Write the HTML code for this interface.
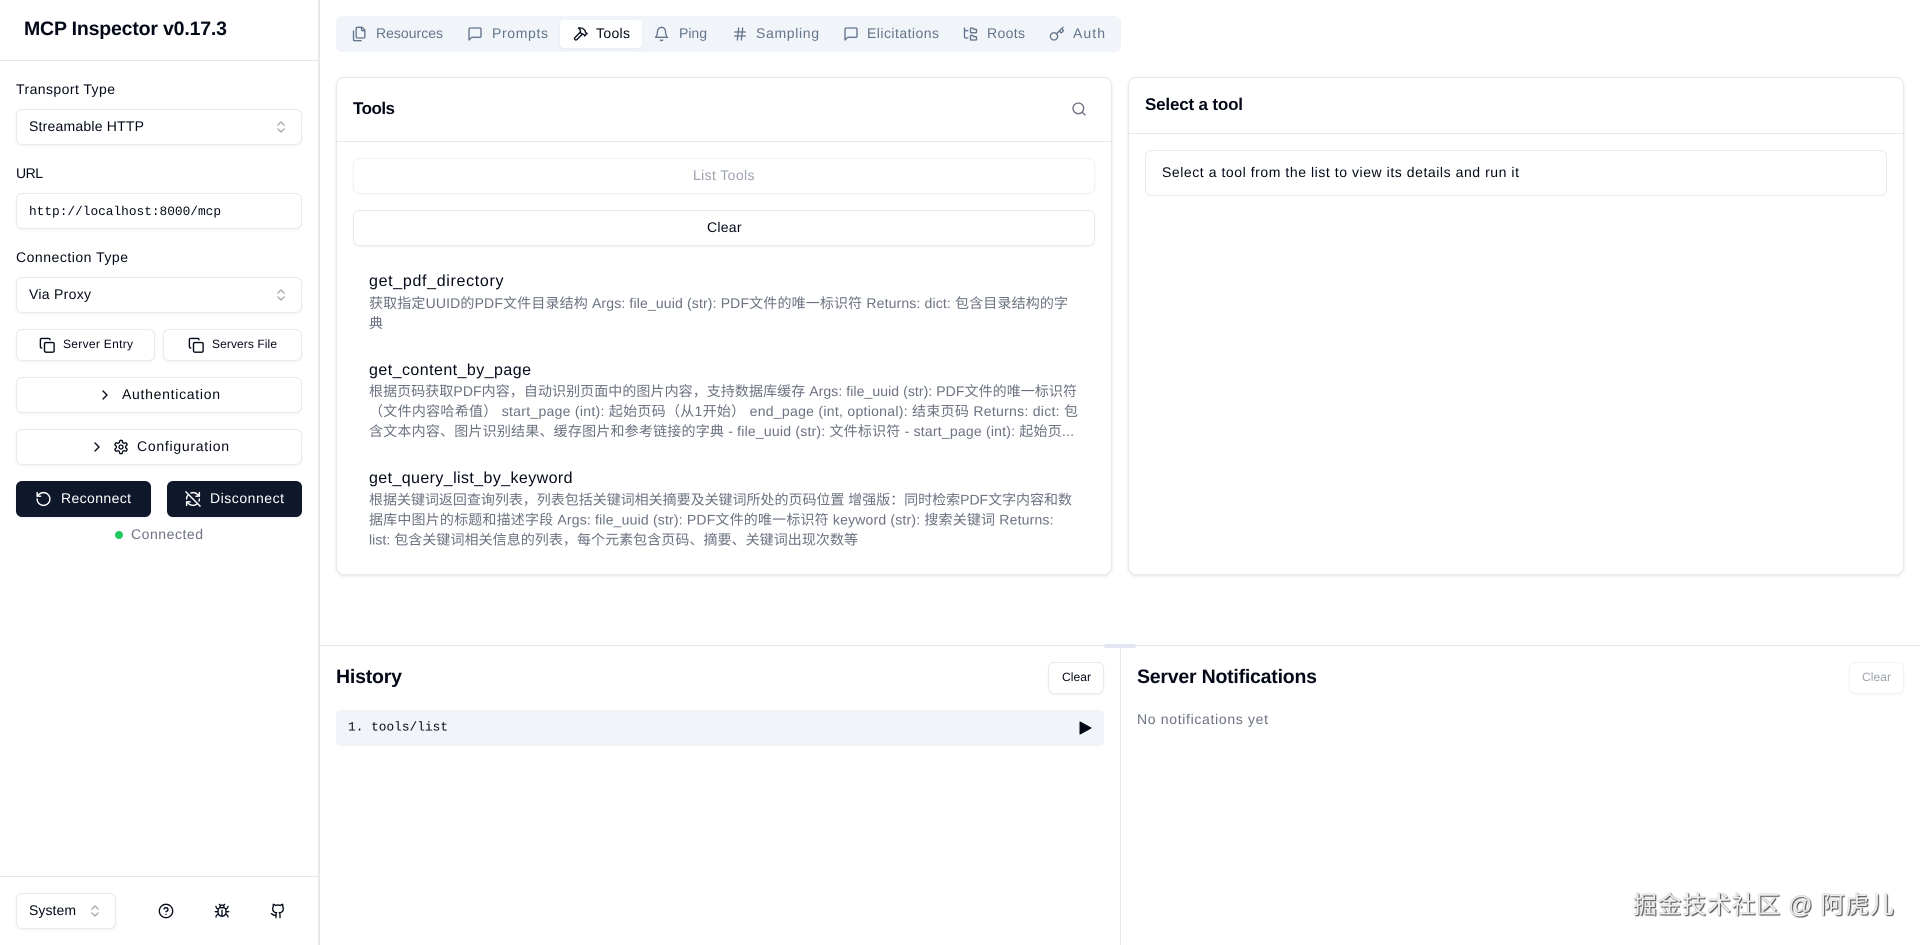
<!DOCTYPE html>
<html lang="en"><head><meta charset="utf-8"><title>MCP Inspector</title>
<style>
html,body{margin:0;padding:0;width:1920px;height:945px;overflow:hidden;background:#fff}
.b{position:absolute;box-sizing:border-box;background:#fff;border:1px solid #e6eaf0;border-radius:6px;box-shadow:0 1px 2px rgba(0,0,0,.05)}
.l{position:absolute;background:#e5e7eb}
svg#o{position:absolute;left:0;top:0}
text{font-family:"Liberation Sans","Noto Sans CJK SC",sans-serif;font-size:14px;fill:#020817;text-rendering:geometricPrecision;transform:translateY(-.8px)}
.t{fill:#64748b}.m{font-family:"Liberation Mono",monospace;font-size:12.8px}
.h{font-weight:700;font-size:19.5px}.c{font-size:17px;font-weight:700}
.n{font-size:16px}.d{fill:#6b7280}.s{font-size:12px}.w{fill:#fff}.g{fill:#9ca3af}
.i{fill:none;stroke:#020817;stroke-width:2;stroke-linecap:round;stroke-linejoin:round}
.it{stroke:#64748b}.iw{stroke:#fff}.io{stroke:#a3a9b4}
#wm{position:absolute;left:1633px;top:890px;font:24px/32px "Liberation Sans","Noto Sans CJK SC",sans-serif;letter-spacing:.65px;color:#eee;text-shadow:1px 1px 1px #444,0 0 1px #777;white-space:nowrap}
</style></head><body>
<!-- sidebar -->
<div class="l" style="left:318px;top:0;width:2px;height:945px"></div>
<div class="l" style="left:0;top:60px;width:318px;height:1px"></div>
<div class="l" style="left:0;top:876px;width:318px;height:1px"></div>
<div class="b" style="left:16px;top:109px;width:286px;height:36px"></div>
<div class="b" style="left:16px;top:193px;width:286px;height:36px"></div>
<div class="b" style="left:16px;top:277px;width:286px;height:36px"></div>
<div class="b" style="left:16px;top:329px;width:139px;height:32px"></div>
<div class="b" style="left:163px;top:329px;width:139px;height:32px"></div>
<div class="b" style="left:16px;top:377px;width:286px;height:36px"></div>
<div class="b" style="left:16px;top:429px;width:286px;height:36px"></div>
<div class="b" style="left:16px;top:481px;width:135px;height:36px;background:#0f172a;border-color:#0f172a"></div>
<div class="b" style="left:167px;top:481px;width:135px;height:36px;background:#0f172a;border-color:#0f172a"></div>
<div style="position:absolute;left:115px;top:531px;width:8px;height:8px;border-radius:50%;background:#22c55e"></div>
<div class="b" style="left:16px;top:893px;width:100px;height:36px"></div>
<!-- tabs -->
<div style="position:absolute;left:336px;top:16px;width:785px;height:36px;border-radius:6px;background:#f1f5f9"></div>
<div class="b" style="left:560px;top:20px;width:82px;height:28px;border:0;border-radius:4px"></div>
<!-- cards -->
<div class="b" style="left:336px;top:77px;width:776px;height:498px;border-radius:8px;box-shadow:0 1px 3px rgba(0,0,0,.1)"></div>
<div class="l" style="left:337px;top:141px;width:774px;height:1px"></div>
<div class="b" style="left:353px;top:158px;width:742px;height:36px;box-shadow:0 1px 2px rgba(0,0,0,.03);border-color:#eff2f6"></div>
<div class="b" style="left:353px;top:210px;width:742px;height:36px"></div>
<div class="b" style="left:1128px;top:77px;width:776px;height:498px;border-radius:8px;box-shadow:0 1px 3px rgba(0,0,0,.1)"></div>
<div class="l" style="left:1129px;top:133px;width:774px;height:1px"></div>
<div class="b" style="left:1145px;top:150px;width:742px;height:46px;box-shadow:none"></div>
<!-- bottom -->
<div class="l" style="left:320px;top:645px;width:1600px;height:1px"></div>
<div class="l" style="left:1120px;top:646px;width:1px;height:299px"></div>
<div style="position:absolute;left:1104px;top:644px;width:32px;height:4px;border-radius:2px;background:#e4e7f3"></div>
<div class="b" style="left:1048px;top:662px;width:56px;height:32px"></div>
<div class="b" style="left:1849px;top:662px;width:55px;height:32px;box-shadow:0 1px 2px rgba(0,0,0,.03);border-color:#eff2f6"></div>
<div style="position:absolute;left:336px;top:710px;width:768px;height:36px;border-radius:4px;background:#f1f5f9"></div>

<svg id="o" width="1920" height="945" viewBox="0 0 1920 945" xmlns="http://www.w3.org/2000/svg">
<!-- sidebar text -->
<text x="24" y="36" textLength="203" style="font-size:19.5px;font-weight:700">MCP Inspector v0.17.3</text>
<text x="16" y="95" textLength="99">Transport Type</text>
<text x="29" y="132" textLength="115">Streamable HTTP</text>
<text x="16" y="179" textLength="27">URL</text>
<text x="29" y="216" class="m" textLength="192">http://localhost:8000/mcp</text>
<text x="16" y="263" textLength="112">Connection Type</text>
<text x="29" y="300" textLength="62">Via Proxy</text>
<text x="63" y="349" class="s" textLength="70">Server Entry</text>
<text x="212" y="349" class="s" textLength="65">Servers File</text>
<text x="122" y="400" textLength="98">Authentication</text>
<text x="137" y="452" textLength="92">Configuration</text>
<text x="61" y="504" class="w" textLength="70">Reconnect</text>
<text x="210" y="504" class="w" textLength="74">Disconnect</text>
<text x="131" y="540" class="d" textLength="72">Connected</text>
<text x="29" y="916" textLength="47">System</text>
<!-- select chevrons -->
<svg x="273.500" y="119.500" width="15" height="15" viewBox="0 0 24 24" class="i io"><path d="m7 15 5 5 5-5"/><path d="m7 9 5-5 5 5"/></svg>
<svg x="273.500" y="287.500" width="15" height="15" viewBox="0 0 24 24" class="i io"><path d="m7 15 5 5 5-5"/><path d="m7 9 5-5 5 5"/></svg>
<svg x="87.500" y="903.500" width="15" height="15" viewBox="0 0 24 24" class="i io"><path d="m7 15 5 5 5-5"/><path d="m7 9 5-5 5 5"/></svg>
<!-- copy -->
<svg x="39" y="337" width="16.500" height="16.500" viewBox="0 0 24 24" class="i"><rect width="14" height="14" x="8" y="8" rx="2" ry="2"/><path d="M4 16c-1.100 0-2-.9-2-2V4c0-1.100.9-2 2-2h10c1.100 0 2 .9 2 2"/></svg>
<svg x="188" y="337" width="16.500" height="16.500" viewBox="0 0 24 24" class="i"><rect width="14" height="14" x="8" y="8" rx="2" ry="2"/><path d="M4 16c-1.100 0-2-.9-2-2V4c0-1.100.9-2 2-2h10c1.100 0 2 .9 2 2"/></svg>
<!-- chevron right -->
<svg x="97" y="387" width="16" height="16" viewBox="0 0 24 24" class="i"><path d="m9 18 6-6-6-6"/></svg>
<svg x="89" y="439" width="16" height="16" viewBox="0 0 24 24" class="i"><path d="m9 18 6-6-6-6"/></svg>
<!-- gear -->
<svg x="113" y="439" width="16" height="16" viewBox="0 0 24 24" class="i"><path d="M12.220 2h-.44a2 2 0 0 0-2 2v.18a2 2 0 0 1-1 1.730l-.43.25a2 2 0 0 1-2 0l-.15-.08a2 2 0 0 0-2.730.73l-.22.38a2 2 0 0 0 .73 2.730l.15.1a2 2 0 0 1 1 1.720v.51a2 2 0 0 1-1 1.740l-.15.09a2 2 0 0 0-.73 2.730l.22.38a2 2 0 0 0 2.730.73l.15-.08a2 2 0 0 1 2 0l.43.25a2 2 0 0 1 1 1.730V20a2 2 0 0 0 2 2h.44a2 2 0 0 0 2-2v-.18a2 2 0 0 1 1-1.730l.43-.25a2 2 0 0 1 2 0l.15.08a2 2 0 0 0 2.730-.73l.22-.39a2 2 0 0 0-.73-2.730l-.15-.08a2 2 0 0 1-1-1.740v-.5a2 2 0 0 1 1-1.740l.15-.09a2 2 0 0 0 .73-2.730l-.22-.38a2 2 0 0 0-2.730-.73l-.15.08a2 2 0 0 1-2 0l-.43-.25a2 2 0 0 1-1-1.730V4a2 2 0 0 0-2-2z"/><circle cx="12" cy="12" r="3"/></svg>
<!-- reconnect -->
<svg x="35" y="490.500" width="17" height="17" viewBox="0 0 24 24" class="i iw"><path d="M3 12a9 9 0 1 0 9-9 9.750 9.750 0 0 0-6.740 2.740L3 8"/><path d="M3 3v5h5"/></svg>
<svg x="184.500" y="490.500" width="17" height="17" viewBox="0 0 24 24" class="i iw"><path d="M21 8L18.740 5.740A9.750 9.750 0 0 0 12 3C11 3 10.030 3.160 9.130 3.470"/><path d="M8 16H3v5"/><path d="M3 12C3 9.510 4 7.260 5.640 5.640"/><path d="m3 16 2.260 2.260A9.750 9.750 0 0 0 12 21c2.490 0 4.740-1 6.360-2.640"/><path d="M21 12c0 1-.16 1.970-.47 2.870"/><path d="M21 3v5h-5"/><path d="M22 22 2 2"/></svg>
<!-- footer icons -->
<svg x="158" y="903" width="16" height="16" viewBox="0 0 24 24" class="i"><circle cx="12" cy="12" r="10"/><path d="M9.090 9a3 3 0 0 1 5.830 1c0 2-3 3-3 3"/><path d="M12 17h.01"/></svg>
<svg x="214" y="903" width="16" height="16" viewBox="0 0 24 24" class="i"><path d="m8 2 1.880 1.880"/><path d="M14.120 3.880 16 2"/><path d="M9 7.130v-1a3.003 3.003 0 1 1 6 0v1"/><path d="M12 20c-3.300 0-6-2.700-6-6v-3a4 4 0 0 1 4-4h4a4 4 0 0 1 4 4v3c0 3.300-2.700 6-6 6"/><path d="M12 20v-9"/><path d="M6.530 9C4.600 8.800 3 7.100 3 5"/><path d="M6 13H2"/><path d="M3 21c0-2.100 1.700-3.900 3.800-4"/><path d="M20.970 5c0 2.100-1.600 3.800-3.500 4"/><path d="M22 13h-4"/><path d="M17.200 17c2.100.1 3.800 1.900 3.800 4"/></svg>
<svg x="270" y="903" width="16" height="16" viewBox="0 0 24 24" class="i"><path d="M15 22v-4a4.800 4.800 0 0 0-1-3.500c3 0 6-2 6-5.500.08-1.250-.27-2.480-1-3.500.28-1.150.28-2.350 0-3.500 0 0-1 0-3 1.500-2.640-.5-5.360-.5-8 0C6 2 5 2 5 2c-.3 1.150-.3 2.350 0 3.500A5.403 5.403 0 0 0 4 9c0 3.500 3 5.500 6 5.500-.39.49-.68 1.050-.85 1.650-.17.6-.22 1.230-.15 1.850v4"/><path d="M9 18c-4.510 2-5-2-7-2"/></svg>

<!-- tabs -->
<svg x="351.500" y="26" width="16" height="16" viewBox="0 0 24 24" class="i it"><path d="M20 7h-3a2 2 0 0 1-2-2V2"/><path d="M9 18a2 2 0 0 1-2-2V4a2 2 0 0 1 2-2h7l4 4v10a2 2 0 0 1-2 2Z"/><path d="M3 7.600v12.800A1.600 1.600 0 0 0 4.600 22h9.800"/></svg>
<text x="376" y="39" class="t" textLength="67">Resources</text>
<svg x="467" y="26" width="16" height="16" viewBox="0 0 24 24" class="i it"><path d="M21 15a2 2 0 0 1-2 2H7l-4 4V5a2 2 0 0 1 2-2h14a2 2 0 0 1 2 2z"/></svg>
<text x="492" y="39" class="t" textLength="56">Prompts</text>
<svg x="572.500" y="26" width="16" height="16" viewBox="0 0 24 24" class="i"><path d="m15 12-8.373 8.373a1 1 0 1 1-3-3L12 9"/><path d="m18 15 4-4"/><path d="m21.500 11.500-1.914-1.914A2 2 0 0 1 19 8.172V7l-2.260-2.260a6 6 0 0 0-4.202-1.756L9 2.960l.92.82A6.180 6.180 0 0 1 12 8.400V10l2 2h1.172a2 2 0 0 1 1.414.586L18.500 14.500"/></svg>
<text x="596" y="39" textLength="34">Tools</text>
<svg x="653.500" y="26" width="16" height="16" viewBox="0 0 24 24" class="i it"><path d="M6 8a6 6 0 0 1 12 0c0 7 3 9 3 9H3s3-2 3-9"/><path d="M10.300 21a1.940 1.940 0 0 0 3.400 0"/></svg>
<text x="679" y="39" class="t" textLength="28">Ping</text>
<svg x="732" y="26" width="16" height="16" viewBox="0 0 24 24" class="i it"><path d="M4 9h16M4 15h16M10 3 8 21M16 3l-2 18"/></svg>
<text x="756" y="39" class="t" textLength="63">Sampling</text>
<svg x="843" y="26" width="16" height="16" viewBox="0 0 24 24" class="i it"><path d="M21 15a2 2 0 0 1-2 2H7l-4 4V5a2 2 0 0 1 2-2h14a2 2 0 0 1 2 2z"/></svg>
<text x="867" y="39" class="t" textLength="72">Elicitations</text>
<svg x="962.500" y="26" width="16" height="16" viewBox="0 0 24 24" class="i it"><path d="M20 10a1 1 0 0 0 1-1V6a1 1 0 0 0-1-1h-2.500a1 1 0 0 1-.8-.4l-.9-1.200A1 1 0 0 0 15 3h-2a1 1 0 0 0-1 1v5a1 1 0 0 0 1 1Z"/><path d="M20 21a1 1 0 0 0 1-1v-3a1 1 0 0 0-1-1h-2.900a1 1 0 0 1-.88-.55l-.42-.85a1 1 0 0 0-.92-.6H13a1 1 0 0 0-1 1v5a1 1 0 0 0 1 1Z"/><path d="M3 5a2 2 0 0 0 2 2h3"/><path d="M3 3v13a2 2 0 0 0 2 2h3"/></svg>
<text x="987" y="39" class="t" textLength="38">Roots</text>
<svg x="1049" y="26" width="16" height="16" viewBox="0 0 24 24" class="i it"><path d="m15.500 7.500 2.300 2.300a1 1 0 0 0 1.400 0l2.100-2.100a1 1 0 0 0 0-1.400L19 4"/><path d="m21 2-9.600 9.600"/><circle cx="7.500" cy="15.500" r="5.500"/></svg>
<text x="1073" y="39" class="t" textLength="32">Auth</text>

<!-- tools card -->
<text x="353" y="115" class="c" textLength="42">Tools</text>
<svg x="1071" y="101" width="16" height="16" viewBox="0 0 24 24" class="i" style="stroke:#6b7280"><circle cx="11" cy="11" r="8"/><path d="m21 21-4.300-4.300"/></svg>
<text x="693" y="181" class="g" textLength="61.500">List Tools</text>
<text x="707" y="233" textLength="34.500">Clear</text>

<text x="369" y="287" class="n" textLength="134.500">get_pdf_directory</text>
<text x="369" y="309" class="d" textLength="699">获取指定UUID的PDF文件目录结构 Args: file_uuid (str): PDF文件的唯一标识符 Returns: dict: 包含目录结构的字</text>
<text x="369" y="329" class="d" textLength="14">典</text>
<text x="369" y="376" class="n" textLength="162">get_content_by_page</text>
<text x="369" y="397" class="d" textLength="708">根据页码获取PDF内容，自动识别页面中的图片内容，支持数据库缓存 Args: file_uuid (str): PDF文件的唯一标识符</text>
<text x="369" y="417" class="d" textLength="709">（文件内容哈希值） start_page (int): 起始页码（从1开始） end_page (int, optional): 结束页码 Returns: dict: 包</text>
<text x="369" y="437" class="d" textLength="705">含文本内容、图片识别结果、缓存图片和参考链接的字典 - file_uuid (str): 文件标识符 - start_page (int): 起始页...</text>
<text x="369" y="484" class="n" textLength="203.500">get_query_list_by_keyword</text>
<text x="369" y="505.500" class="d" textLength="703">根据关键词返回查询列表，列表包括关键词相关摘要及关键词所处的页码位置 增强版：同时检索PDF文字内容和数</text>
<text x="369" y="525.500" class="d" textLength="684.500">据库中图片的标题和描述字段 Args: file_uuid (str): PDF文件的唯一标识符 keyword (str): 搜索关键词 Returns:</text>
<text x="369" y="545.500" class="d" textLength="489">list: 包含关键词相关信息的列表，每个元素包含页码、摘要、关键词出现次数等</text>

<!-- right card -->
<text x="1145" y="111" class="c" textLength="98">Select a tool</text>
<text x="1162" y="178" textLength="357">Select a tool from the list to view its details and run it</text>

<!-- bottom -->
<text x="336" y="684" class="h" textLength="66">History</text>
<text x="1062" y="682" class="s" textLength="29">Clear</text>
<text x="348" y="731.500" class="m" textLength="100">1. tools/list</text>
<polygon points="1080,722 1091,728 1080,734" fill="#020817" stroke="#020817" stroke-width="1" stroke-linejoin="round"/>
<text x="1137" y="684" class="h" textLength="180">Server Notifications</text>
<text x="1862" y="682" class="s g" textLength="29">Clear</text>
<text x="1137" y="725" class="d" textLength="131">No notifications yet</text>
</svg>
<div id="wm">掘金技术社区 @ 阿虎儿</div>
</body></html>
